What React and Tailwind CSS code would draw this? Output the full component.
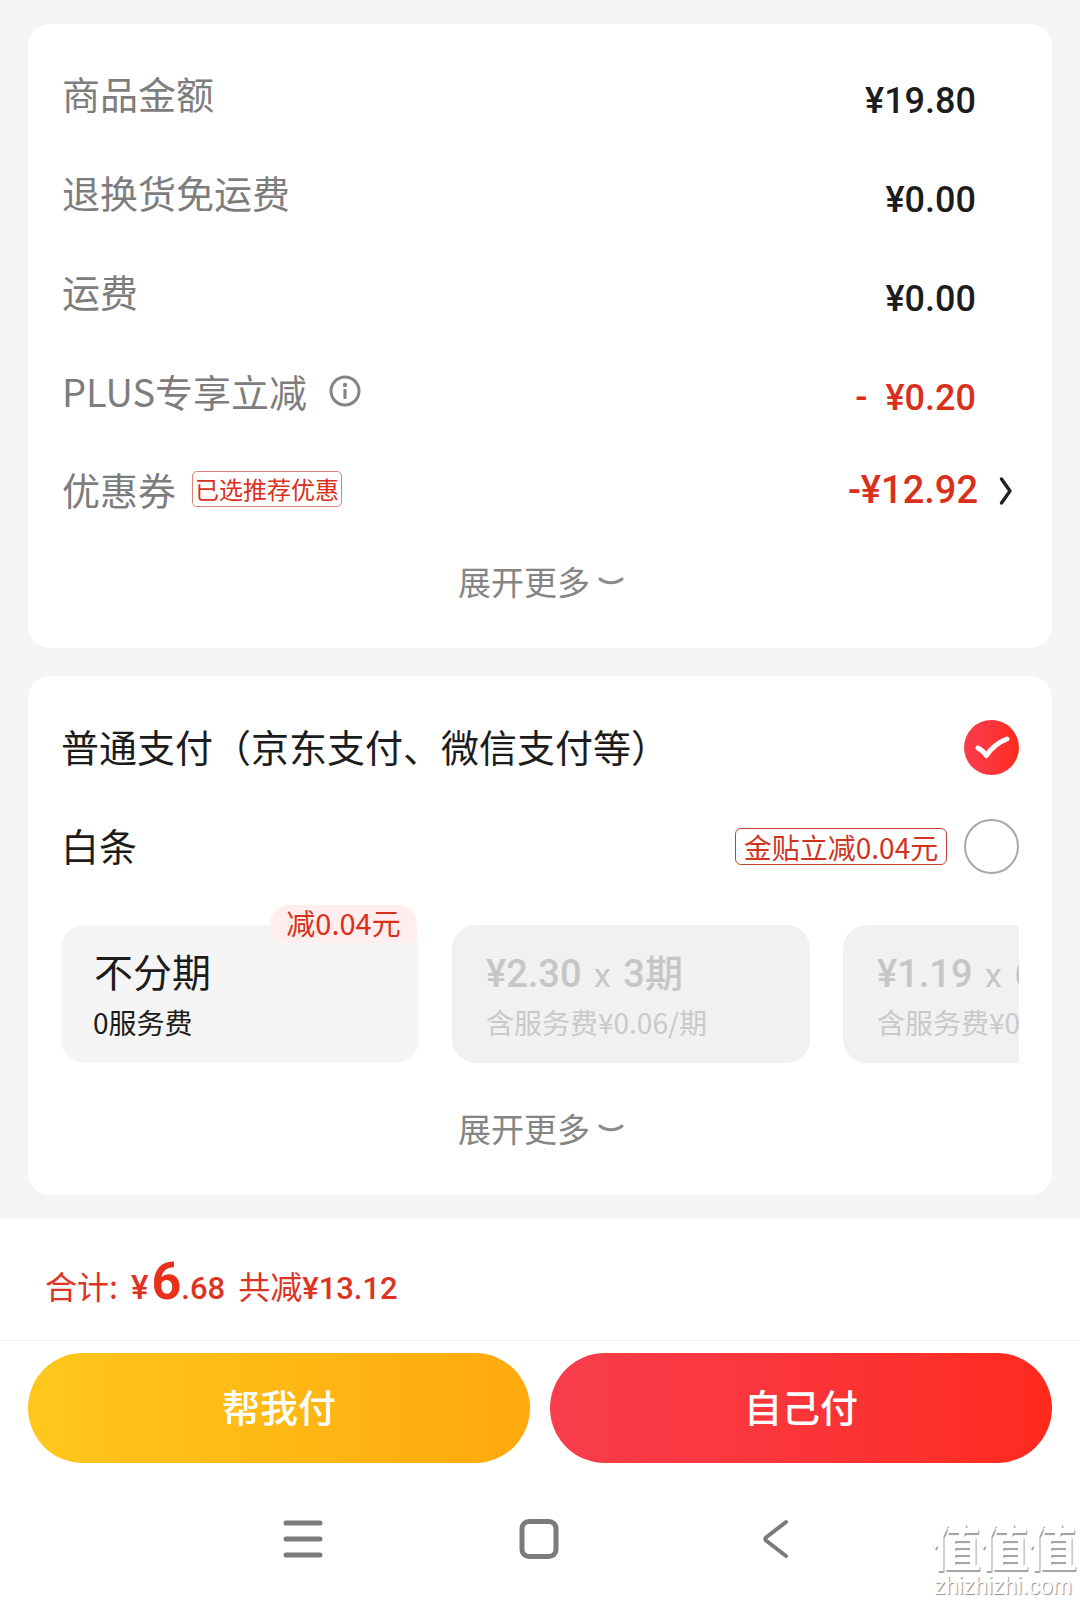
import React from 'react';

const cjk = { fontFamily: '"Noto Sans CJK SC", sans-serif' };

const rows = [
  { label: '商品金额', value: '¥19.80' },
  { label: '退换货免运费', value: '¥0.00' },
  { label: '运费', value: '¥0.00' },
];

const Expand = () => (
  <div className="flex items-center justify-center gap-[8px] text-[33px] leading-[44px] text-[#858585]">
    <span>展开更多</span>
    <svg width="26" height="12" viewBox="0 0 26 12" className="mt-[2px]" fill="none">
      <path d="M2 3c6 5 16 5 22 0" stroke="#8a8a8a" strokeWidth="3" strokeLinecap="round" />
    </svg>
  </div>
);

const Plan = ({ price, times, fee }) => (
  <div className="w-[358px] h-[138px] shrink-0 rounded-[24px] bg-[#f1f1f1] pl-[34px] pt-[26px] text-[#c6c6c6] whitespace-nowrap">
    <div className="text-[38px] leading-[46px] font-medium [font-family:Roboto,'Noto_Sans_CJK_SC',sans-serif]">
      {price} <span className="font-normal text-[34px] mx-[3px]">x</span> {times}
    </div>
    <div className="mt-[6px] text-[28px] leading-[36px] text-[#c9c9c9]">{fee}</div>
  </div>
);

export default function App() {
  return (
    <div className="relative w-[1080px] h-[1604px] overflow-hidden bg-[#f5f5f5] flex flex-col" style={cjk}>
      {/* 金额明细 */}
      <div className="mx-[28px] mt-[24px] h-[624px] rounded-[22px] bg-white pl-[34px] pr-[40px] pt-[25px]">
        {rows.map((r) => (
          <div key={r.label} className="flex h-[99px] items-center justify-between pr-[36px]">
            <span className="mb-[13px] text-[38px] text-[#7d7d7d]">{r.label}</span>
            <span className="mt-[4px] text-[36px] font-medium text-[#1c1c1c] [font-family:Roboto,sans-serif]">{r.value}</span>
          </div>
        ))}
        <div className="flex h-[99px] items-center justify-between pr-[36px]">
          <div className="mb-[10px] flex items-center">
            <span className="text-[38px] text-[#7d7d7d]">PLUS专享立减</span>
            <svg width="32" height="32" viewBox="0 0 32 32" className="ml-[22px]" fill="none">
              <circle cx="16" cy="16" r="14" stroke="#858585" strokeWidth="3" />
              <circle cx="16" cy="10" r="2.2" fill="#858585" />
              <rect x="14.4" y="14" width="3.2" height="10" rx="1" fill="#858585" />
            </svg>
          </div>
          <span className="mt-[4px] text-[36px] font-medium text-[#d9301c] [font-family:Roboto,sans-serif] whitespace-pre">-  ¥0.20</span>
        </div>
        <div className="flex h-[99px] items-center justify-between">
          <div className="mb-[12px] flex items-center">
            <span className="text-[38px] text-[#7d7d7d]">优惠券</span>
            <span className="ml-[16px] flex h-[36px] w-[150px] items-center justify-center rounded-[5px] border border-[#d9827a] text-[24px] text-[#d9301c] whitespace-nowrap">已选推荐优惠</span>
          </div>
          <div className="mb-[8px] flex items-center">
            <span className="text-[38px] font-medium text-[#d9301c] [font-family:Roboto,sans-serif]">-¥12.92</span>
            <svg width="14" height="30" viewBox="0 0 14 30" className="ml-[21px] mr-[-1px]" fill="none">
              <path d="M2.500 3l8.500 12-8.500 12" stroke="#222" strokeWidth="3.400" strokeLinecap="round" strokeLinejoin="round" />
            </svg>
          </div>
        </div>
        <div className="mt-[15px] mr-[-8px]"><Expand /></div>
      </div>

      {/* 支付方式 */}
      <div className="mx-[28px] mt-[28px] h-[519px] rounded-[22px] bg-white pl-[33px] pr-[33px] pt-[22px]">
        <div className="flex h-[99px] items-center justify-between">
          <span className="mb-[4px] text-[38px] text-[#1c1c1c]">普通支付（京东支付、微信支付等）</span>
          <div className="flex h-[55px] w-[55px] items-center justify-center rounded-full bg-gradient-to-r from-[#f83d4d] to-[#fe2a1b]">
            <svg width="36" height="26" viewBox="0 0 36 26" fill="none">
              <path d="M4 13c3 1.500 6 4 8.500 7.500C18 12 25 7 33 4" stroke="#fff" strokeWidth="5" strokeLinecap="round" strokeLinejoin="round" />
            </svg>
          </div>
        </div>
        <div className="flex h-[99px] items-center justify-between">
          <span className="mb-[4px] text-[38px] text-[#1c1c1c]">白条</span>
          <div className="flex items-center">
            <span className="flex h-[37px] w-[212px] items-center justify-center rounded-[6px] border border-[#c9402e] text-[28px] text-[#d0341f] whitespace-nowrap">金贴立减0.04元</span>
            <div className="ml-[17px] h-[55px] w-[55px] rounded-full border-2 border-[#a8a8a8]" />
          </div>
        </div>
        <div className="mt-[29px] flex gap-[33px] overflow-hidden">
          <div className="relative h-[138px] w-[358px] shrink-0 rounded-[24px] bg-[#f5f5f5] pl-[33px] pt-[22px] text-[#1c1c1c]">
            <div className="text-[39px] leading-[46px]">不分期</div>
            <div className="mt-[11px] ml-[-1px] text-[28px] leading-[36px]">0服务费</div>
          </div>
          <Plan price="¥2.30" times="3期" fee="含服务费¥0.06/期" />
          <Plan price="¥1.19" times="6期" fee="含服务费¥0.06/期" />
        </div>
        <div className="mt-[43px] mr-[-2px]"><Expand /></div>
      </div>

      {/* 角标 */}
      <span className="absolute left-[270px] top-[905px] flex h-[38px] w-[147px] items-center justify-center rounded-tl-[20px] rounded-tr-[20px] rounded-br-[4px] rounded-bl-[20px] bg-[#ffeeed] pb-[3px] text-[29px] text-[#d9301c] whitespace-nowrap">减0.04元</span>

      {/* 底部合计和按钮 */}
      <div className="mt-[24px] flex-1 bg-white">
        <div className="flex h-[122px] items-baseline border-b border-[#f2f2f2] pl-[45px] pt-[33px] text-[#dd3322] whitespace-nowrap">
          <span className="text-[32px]">合计:</span>
          <span className="ml-[13px] text-[33px] font-medium [font-family:Roboto,sans-serif]">¥</span>
          <span className="ml-[3px] text-[52px] leading-[60px] font-bold text-[#e8301c] [font-family:Roboto,sans-serif]">6</span>
          <span className="text-[31px] font-medium [font-family:Roboto,sans-serif]">.68</span>
          <span className="ml-[13px] text-[32px]">共减</span>
          <span className="text-[31px] font-medium [font-family:Roboto,sans-serif]">¥13.12</span>
        </div>
        <div className="mx-[28px] mt-[12px] flex gap-[20px]">
          <button className="h-[110px] flex-1 rounded-full bg-gradient-to-r from-[#ffc71c] to-[#ffa90c] pb-[5px] text-[38px] font-medium text-white">帮我付</button>
          <button className="h-[110px] flex-1 rounded-full bg-gradient-to-r from-[#f83d4d] to-[#fe2a1b] pb-[5px] text-[38px] font-medium text-white">自己付</button>
        </div>
        <div className="relative mt-[56px] h-[40px]">
          <svg className="absolute left-[283px] top-0" width="40" height="40" viewBox="0 0 40 40" fill="none">
            <path d="M3 4h34M3 20h34M3 36h34" stroke="#7b7b7b" strokeWidth="5" strokeLinecap="round" />
          </svg>
          <svg className="absolute left-[519px] top-0" width="40" height="40" viewBox="0 0 40 40" fill="none">
            <rect x="3" y="2.500" width="34" height="35" rx="7" stroke="#7b7b7b" strokeWidth="5" />
          </svg>
          <svg className="absolute left-[760px] top-0" width="30" height="40" viewBox="0 0 30 40" fill="none">
            <path d="M26 3L6 18.500c-1 1-1 2 0 3L26 37" stroke="#7b7b7b" strokeWidth="4" strokeLinecap="round" />
          </svg>
        </div>
      </div>

      {/* 水印 */}
      <div className="absolute left-[929px] top-[1515px] w-[148px] text-center text-white">
        <div className="text-[50px] leading-[58px] font-bold tracking-[-2px] [text-shadow:1px_2px_1px_#a0a0a0]">值值值</div>
        <div className="text-[23px] leading-[26px] [font-family:'Liberation_Sans',sans-serif] [text-shadow:1px_1px_1px_#909090]">zhizhizhi.com</div>
      </div>
    </div>
  );
}
